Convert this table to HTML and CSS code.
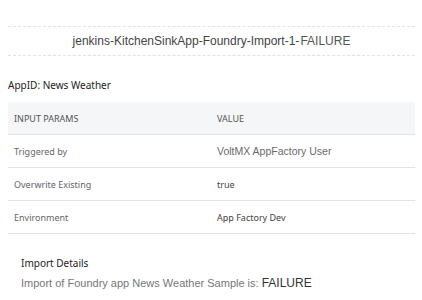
FILE: index.html
```html
<!DOCTYPE html>
<html lang="en">
<head>
  <meta charset="UTF-8">
  <title>Import Report</title>
  <link rel="stylesheet" href="styles.css">
</head>
<body>
  <div class="report">
    <div class="job-title">
      jenkins-KitchenSinkApp-Foundry-Import-1-<span class="status">FAILURE</span>
    </div>

    <p class="app-id">AppID: News Weather</p>

    <table class="params">
      <thead>
        <tr>
          <th>INPUT PARAMS</th>
          <th>VALUE</th>
        </tr>
      </thead>
      <tbody>
        <tr>
          <td>Triggered by</td>
          <td class="user">VoltMX AppFactory User</td>
        </tr>
        <tr>
          <td>Overwrite Existing</td>
          <td class="value">true</td>
        </tr>
        <tr>
          <td>Environment</td>
          <td class="value">App Factory Dev</td>
        </tr>
      </tbody>
    </table>

    <div class="details">
      <h4>Import Details</h4>
      <p>Import of Foundry app News Weather Sample is: <span class="status">FAILURE</span></p>
    </div>
  </div>
</body>
</html>
```

FILE: styles.css
```css
body {
  margin: 0;
  background: #ffffff;
  font-family: "Noto Sans", sans-serif;
  color: #222222;
}

.report {
  padding: 26px 7px 0 8px;
}

.job-title {
  border-top: 1px dashed #e2e2e2;
  border-bottom: 1px dashed #e2e2e2;
  height: 28px;
  line-height: 28px;
  text-align: center;
  font-family: "Liberation Sans", Arial, sans-serif;
  font-size: 12px;
  color: #444444;
}

.job-title .status {
  margin-left: 1px;
  color: #555555;
}

.app-id {
  margin: 21px 0 0;
  font-size: 10px;
  line-height: 16px;
  color: #222222;
}

.params {
  width: 100%;
  margin-top: 9px;
  border-collapse: collapse;
  font-size: 9px;
}

.params th,
.params td {
  height: 32px;
  padding: 0 6px;
  text-align: left;
  font-weight: normal;
  border-bottom: 1px solid #e3e3e3;
  color: #666666;
}

.params th {
  background: #f5f6f7;
  color: #555555;
}

.params th:first-child,
.params td:first-child {
  width: 191px;
}

.params .user {
  font-family: "Liberation Sans", Arial, sans-serif;
  font-size: 10.5px;
  color: #6a6a6a;
}

.params .value {
  color: #444444;
}

.details {
  padding: 21px 13px 0;
}

.details h4 {
  margin: 0;
  font-size: 10px;
  font-weight: normal;
  line-height: 16px;
  color: #222222;
}

.details p {
  margin: 5px 0 0;
  font-family: "Liberation Sans", Arial, sans-serif;
  font-size: 11px;
  color: #777777;
}

.details .status {
  font-size: 12px;
  color: #333333;
}
```
